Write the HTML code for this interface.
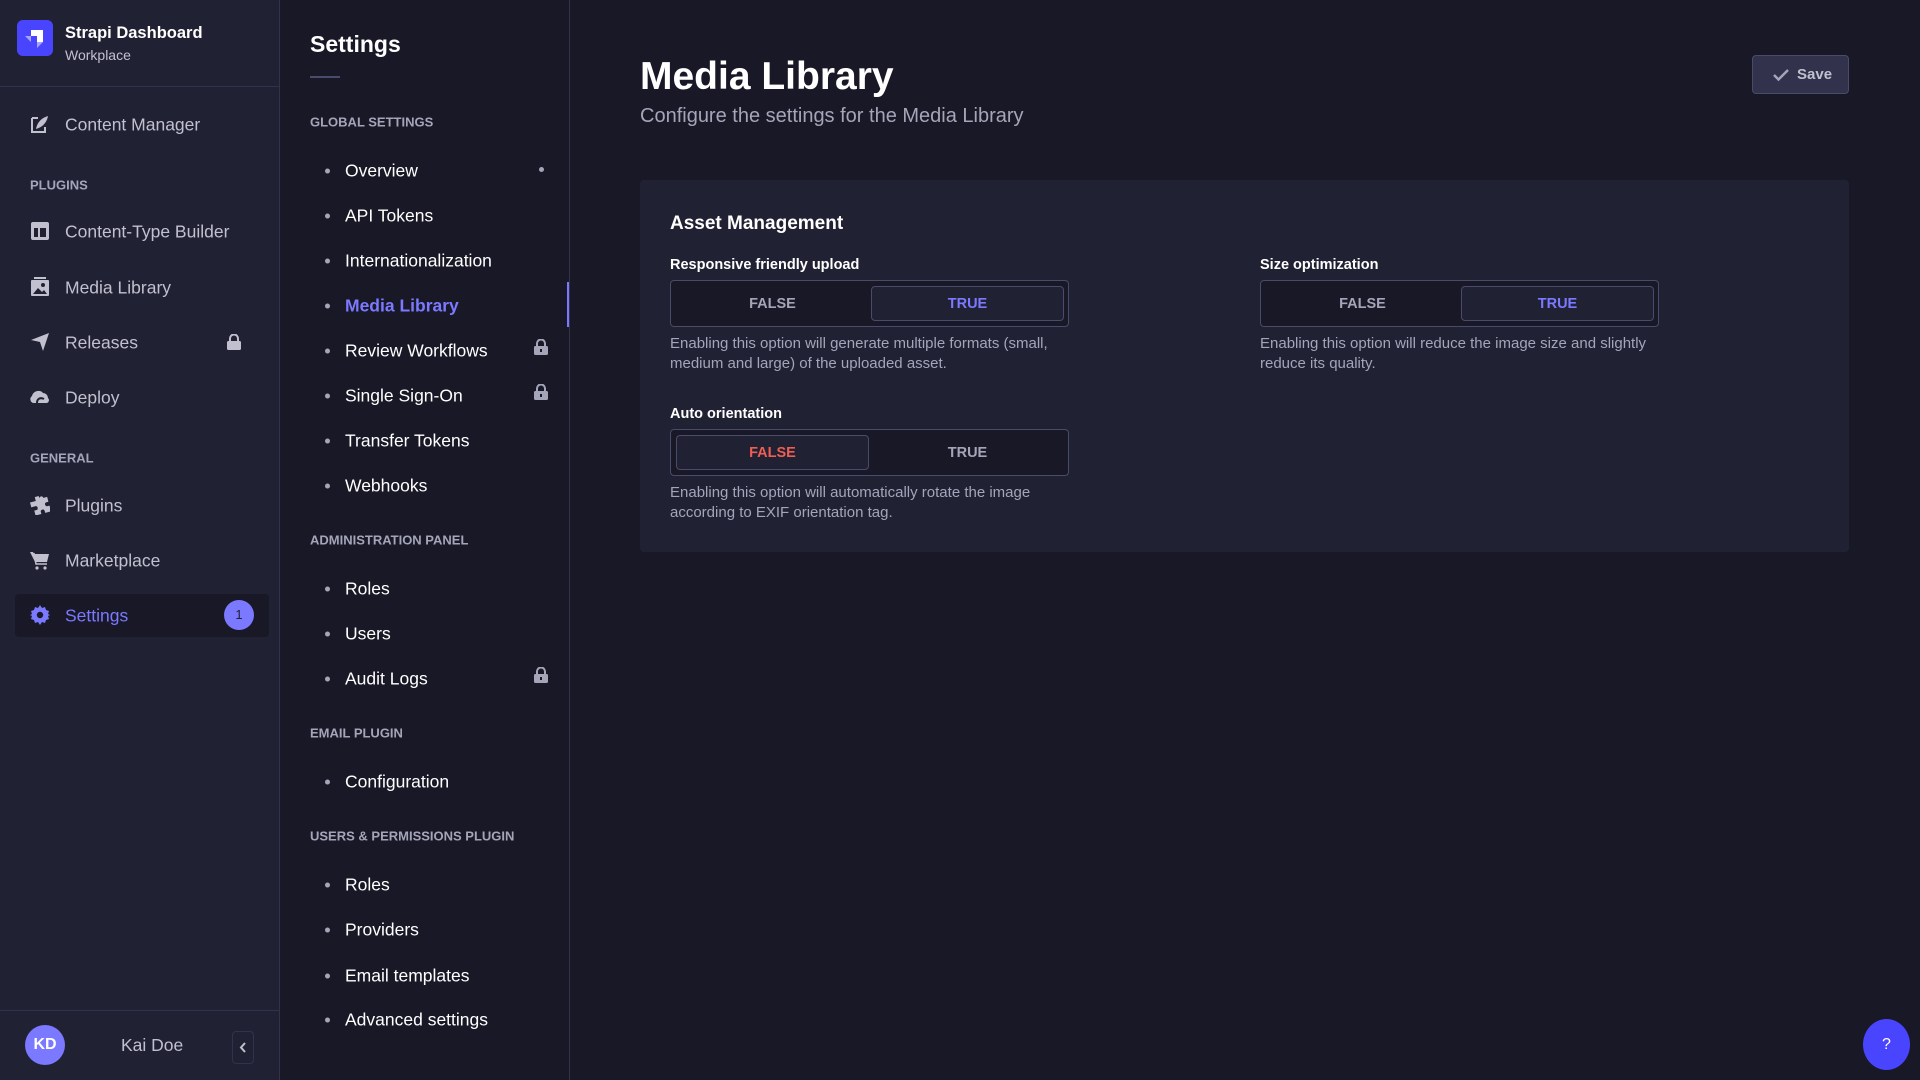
<!DOCTYPE html>
<html><head><meta charset="utf-8"><style>
*{box-sizing:border-box;margin:0;padding:0}
body{width:1920px;height:1080px;overflow:hidden;background:#181826;font-family:"Liberation Sans",sans-serif;position:relative;color:#fff}
.abs{position:absolute}
.side{left:0;top:0;width:280px;height:1080px;background:#212134;border-right:1px solid #32324d}
.nav{position:absolute;left:65px;font-size:17.5px;color:#c0c0cf;transform:translateY(-45%)}
.ic{position:absolute;left:30px;width:20px;height:20px;transform:translateY(-50%)}
.sec{position:absolute;font-size:13px;font-weight:bold;color:#a5a5ba;transform:translateY(-45%)}
.sp{left:280px;top:0;width:290px;height:1080px;background:#181826;border-right:1px solid #32324d}
.it{position:absolute;left:345px;font-size:17.5px;color:#fff;transform:translateY(-45%)}
.it:before{content:"";position:absolute;left:-20px;top:50%;width:5px;height:5px;margin-top:-3px;border-radius:50%;background:#a5a5ba}
.lock{position:absolute;width:14px;height:16px;transform:translateY(-50%)}
.tog{position:absolute;width:399px;height:47px;background:#181826;border:1px solid #4a4a6a;border-radius:4px;font-size:14.5px;font-weight:bold}
.tog span{position:absolute;top:5px;width:193px;height:35px;line-height:36px;text-align:center;color:#a5a5ba;border-radius:4px}
.tog .a{background:#212134;border:1px solid #4a4a6a;line-height:34px}
.lbl{position:absolute;font-size:14.5px;font-weight:bold;color:#fff;transform:translateY(-45%)}
.desc{position:absolute;font-size:15px;line-height:20px;color:#a5a5ba}
</style></head><body>
<div class="abs side">
  <div class="abs" style="left:17px;top:20px;width:36px;height:36px;border-radius:6px;background:#4945ff">
    <svg width="36" height="36" viewBox="0 0 36 36"><path d="M14 10h12v12h-6v-6h-6z" fill="#fff"/><path d="M8 16h6v6z M20 22h6l-6 6z" fill="#a5a4ff"/></svg>
  </div>
  <div class="abs" style="left:65px;top:24px;font-size:16.5px;font-weight:bold">Strapi Dashboard</div>
  <div class="abs" style="left:65px;top:47px;font-size:14px;color:#c0c0cf">Workplace</div>
  <div class="abs" style="left:0;top:86px;width:280px;height:1px;background:#32324d"></div>

  <svg class="ic" style="top:124px" viewBox="0 0 20 20"><path d="M2 4h6M2 4v14h13v-5" stroke="#c0c0cf" stroke-width="2" fill="none"/><path d="M6 15c1-6 5-11 12-13-1 6-5 11-12 13z" fill="#c0c0cf"/></svg>
  <div class="nav" style="top:124px">Content Manager</div>
  <div class="sec" style="left:30px;top:184px">PLUGINS</div>
  <svg class="ic" style="top:231px" viewBox="0 0 20 20"><rect x="1" y="1" width="18" height="18" rx="2" fill="#c0c0cf"/><rect x="4" y="7" width="4" height="9" fill="#212134"/><rect x="10" y="7" width="6" height="9" fill="#212134"/></svg>
  <div class="nav" style="top:231px">Content-Type Builder</div>
  <svg class="ic" style="top:287px" viewBox="0 0 20 20"><rect x="4" y="0" width="12" height="2" fill="#c0c0cf"/><rect x="1" y="3" width="18" height="16" rx="1" fill="#c0c0cf"/><path d="M3 17l5-6 4 4 2-2 3 4z" fill="#212134"/><circle cx="13" cy="8" r="2" fill="#212134"/></svg>
  <div class="nav" style="top:287px">Media Library</div>
  <svg class="ic" style="top:342px" viewBox="0 0 20 20"><path d="M1 8L19 1 13 19 10 10z" fill="#c0c0cf"/></svg>
  <div class="nav" style="top:342px">Releases</div>
  <svg class="lock" style="left:227px;top:342px" viewBox="0 0 14 16"><path d="M3 7V4.5a4 4 0 018 0V7" stroke="#c0c0cf" stroke-width="2" fill="none"/><rect x="0" y="7" width="14" height="9" rx="1.5" fill="#c0c0cf"/></svg>
  <svg class="ic" style="top:397px" viewBox="0 0 20 20"><path d="M3 16a4 4 0 01-1-7c1-5 8-7 11-3a5 5 0 015 5 3 3 0 01-1 5z" fill="#c0c0cf"/><path d="M7 16c0-4 3-6 7-4" stroke="#212134" stroke-width="2" fill="none"/></svg>
  <div class="nav" style="top:397px">Deploy</div>
  <div class="sec" style="left:30px;top:457px">GENERAL</div>
  <svg class="ic" style="top:505px" viewBox="0 0 20 20"><path d="M7 1h4v3a2 2 0 114 0v0h4v5h-2a2 2 0 100 4h2v6h-6v-2a2 2 0 10-4 0v2H3v-5h2a2 2 0 100-4H1V5h6z" fill="#c0c0cf" transform="rotate(-15 10 10)"/></svg>
  <div class="nav" style="top:505px">Plugins</div>
  <svg class="ic" style="top:560px" viewBox="0 0 20 20"><path d="M0 2h3l1 2h15l-2 8H5z" fill="#c0c0cf"/><path d="M4 3l2 11h11" stroke="#c0c0cf" stroke-width="1.5" fill="none"/><circle cx="7" cy="18" r="1.6" fill="#c0c0cf"/><circle cx="15" cy="18" r="1.6" fill="#c0c0cf"/></svg>
  <div class="nav" style="top:560px">Marketplace</div>
  <div class="abs" style="left:15px;top:594px;width:254px;height:43px;background:#181826;border-radius:4px"></div>
  <svg class="ic" style="top:615px" viewBox="0 0 20 20"><path d="M10 0l2 3 3-1 1 3 3 1-1 3 2 1-2 1 1 3-3 1-1 3-3-1-2 3-2-3-3 1-1-3-3-1 1-3-2-1 2-1-1-3 3-1 1-3 3 1z" fill="#7b79ff"/><circle cx="10" cy="10" r="3.2" fill="#181826"/></svg>
  <div class="nav" style="top:615px;color:#7b79ff">Settings</div>
  <div class="abs" style="left:224px;top:600px;width:30px;height:30px;border-radius:50%;background:#7b79ff;color:#212134;font-size:13px;text-align:center;line-height:30px">1</div>
  <div class="abs" style="left:0;top:1010px;width:280px;height:1px;background:#32324d"></div>
  <div class="abs" style="left:25px;top:1025px;width:40px;height:40px;border-radius:50%;background:#7b79ff;font-size:16px;font-weight:bold;text-align:center;line-height:40px">KD</div>
  <div class="abs" style="left:121px;top:1035px;font-size:17.5px;color:#c0c0cf">Kai Doe</div>
  <div class="abs" style="left:232px;top:1031px;width:22px;height:33px;border:1px solid #32324d;border-radius:4px">
    <svg width="20" height="31" viewBox="0 0 20 31"><path d="M12 11l-4 4.5 4 4.5" stroke="#c0c0cf" stroke-width="2" fill="none"/></svg>
  </div>
</div>

<div class="abs sp"></div>
<div class="abs" style="left:310px;top:31px;font-size:23px;font-weight:bold">Settings</div>
<div class="abs" style="left:310px;top:76px;width:30px;height:2px;background:#4a4a6a"></div>
<div class="sec" style="left:310px;top:121px">GLOBAL SETTINGS</div>
<div class="it" style="top:170px">Overview</div>
<div class="abs" style="left:539px;top:167px;width:5px;height:5px;border-radius:50%;background:#a5a5ba"></div>
<div class="it" style="top:215px">API Tokens</div>
<div class="it" style="top:260px">Internationalization</div>
<div class="it" style="top:305px;color:#7b79ff;font-weight:bold">Media Library</div>
<div class="abs" style="left:567px;top:282px;width:2px;height:45px;background:#7b79ff"></div>
<div class="it" style="top:350px">Review Workflows</div>
<div class="it" style="top:395px">Single Sign-On</div>
<div class="it" style="top:440px">Transfer Tokens</div>
<div class="it" style="top:485px">Webhooks</div>
<div class="sec" style="left:310px;top:539px">ADMINISTRATION PANEL</div>
<div class="it" style="top:588px">Roles</div>
<div class="it" style="top:633px">Users</div>
<div class="it" style="top:678px">Audit Logs</div>
<div class="sec" style="left:310px;top:732px">EMAIL PLUGIN</div>
<div class="it" style="top:781px">Configuration</div>
<div class="sec" style="left:310px;top:835px">USERS &amp; PERMISSIONS PLUGIN</div>
<div class="it" style="top:884px">Roles</div>
<div class="it" style="top:929px">Providers</div>
<div class="it" style="top:975px">Email templates</div>
<div class="it" style="top:1019px">Advanced settings</div>
<svg class="lock" style="left:534px;top:347px" viewBox="0 0 14 16"><path d="M3 7V4.5a4 4 0 018 0V7" stroke="#a5a5ba" stroke-width="2" fill="none"/><rect x="0" y="7" width="14" height="9" rx="1.5" fill="#a5a5ba"/><rect x="6" y="10" width="2" height="3" fill="#181826"/></svg>
<svg class="lock" style="left:534px;top:392px" viewBox="0 0 14 16"><path d="M3 7V4.5a4 4 0 018 0V7" stroke="#a5a5ba" stroke-width="2" fill="none"/><rect x="0" y="7" width="14" height="9" rx="1.5" fill="#a5a5ba"/><rect x="6" y="10" width="2" height="3" fill="#181826"/></svg>
<svg class="lock" style="left:534px;top:675px" viewBox="0 0 14 16"><path d="M3 7V4.5a4 4 0 018 0V7" stroke="#a5a5ba" stroke-width="2" fill="none"/><rect x="0" y="7" width="14" height="9" rx="1.5" fill="#a5a5ba"/><rect x="6" y="10" width="2" height="3" fill="#181826"/></svg>

<div class="abs" style="left:640px;top:55px;font-size:39px;font-weight:bold">Media Library</div>
<div class="abs" style="left:640px;top:105px;font-size:20px;color:#a5a5ba">Configure the settings for the Media Library</div>
<div class="abs" style="left:1752px;top:55px;width:97px;height:39px;background:#32324d;border:1px solid #4a4a6a;border-radius:4px;color:#c0c0cf;font-size:15px;font-weight:bold;line-height:38px;padding-left:44px">Save
  <svg class="abs" style="left:20px;top:12px" width="16" height="14" viewBox="0 0 16 14"><path d="M1 7l4.5 4.5L15 2" stroke="#a5a5ba" stroke-width="2.5" fill="none"/></svg>
</div>

<div class="abs" style="left:640px;top:180px;width:1209px;height:372px;background:#212134;border-radius:4px"></div>
<div class="abs" style="left:670px;top:213px;font-size:19px;font-weight:bold">Asset Management</div>

<div class="lbl" style="left:670px;top:264px">Responsive friendly upload</div>
<div class="tog" style="left:670px;top:280px"><span style="left:5px">FALSE</span><span class="a" style="left:200px;color:#7b79ff">TRUE</span></div>
<div class="desc" style="left:670px;top:334px">Enabling this option will generate multiple formats (small,<br>medium and large) of the uploaded asset.</div>

<div class="lbl" style="left:1260px;top:264px">Size optimization</div>
<div class="tog" style="left:1260px;top:280px"><span style="left:5px">FALSE</span><span class="a" style="left:200px;color:#7b79ff">TRUE</span></div>
<div class="desc" style="left:1260px;top:334px">Enabling this option will reduce the image size and slightly<br>reduce its quality.</div>

<div class="lbl" style="left:670px;top:413px">Auto orientation</div>
<div class="tog" style="left:670px;top:429px"><span class="a" style="left:5px;color:#ee5e52">FALSE</span><span style="left:200px">TRUE</span></div>
<div class="desc" style="left:670px;top:483px">Enabling this option will automatically rotate the image<br>according to EXIF orientation tag.</div>

<div class="abs" style="left:1863px;top:1019px;width:47px;height:51px;border-radius:50%;background:#4945ff;color:#fff;font-size:16px;text-align:center;line-height:51px">?</div>
</body></html>
